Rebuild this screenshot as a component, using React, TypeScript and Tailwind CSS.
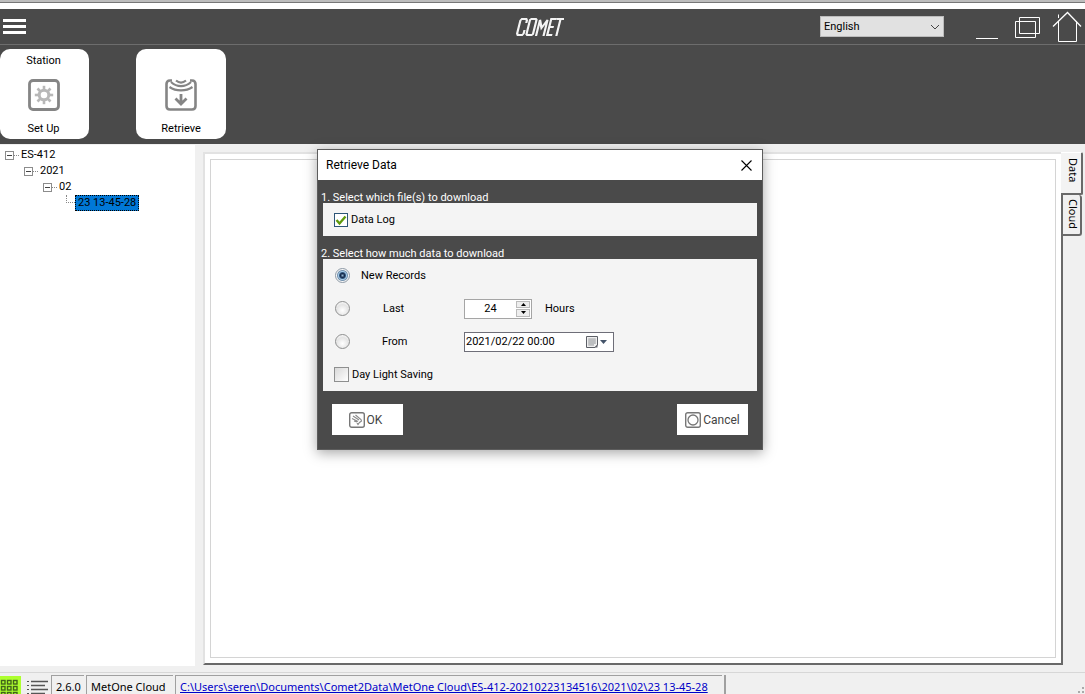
import React, { useState } from "react";

const dialogIcon = "h-4 w-4 shrink-0";

function GearIcon() {
  const teeth = [0, 45, 90, 135, 180, 225, 270, 315];
  return (
    <svg viewBox="0 0 32 32" className="h-8 w-8" fill="none" aria-hidden="true">
      <rect x="1.5" y="1.5" width="29" height="29" rx="3.5" stroke="#858585" strokeWidth="2.8" />
      <g stroke="#b8b8b8">
        <circle cx="16" cy="16" r="4.8" strokeWidth="3" />
        {teeth.map((a) => (
          <path key={a} d="M16 11V6.8" strokeWidth="2.6" transform={`rotate(${a} 16 16)`} />
        ))}
      </g>
    </svg>
  );
}

function RetrieveIcon() {
  return (
    <svg viewBox="0 0 32 32" className="h-8 w-8" fill="none" stroke="#858585" aria-hidden="true">
      <path d="M7 1.5H5C2.5 1.5 1.5 3 1.5 5V27C1.5 29.5 3 30.5 5 30.5H27C29.5 30.5 30.5 29 30.5 27V5C30.5 3 29.5 1.5 27 1.5H25" strokeWidth="2.6" />
      <path d="M4.500 8C11 12.500 21 12.500 27.500 8" strokeWidth="2.200" />
      <path d="M6 3C12 8.500 20 8.500 26 3" strokeWidth="2.200" />
      <path d="M11 1.500C14 4 18 4 21 1.500" strokeWidth="2.200" />
      <path d="M16 15V24.500M10.500 19.500L16 25L21.500 19.500" strokeWidth="2.800" />
    </svg>
  );
}

function Branch({ level, label }: { level: number; label: string }) {
  const indent = ["pl-[5px]", "pl-6", "pl-[43px]"][level];
  return (
    <div className={`flex h-4 items-center ${indent}`}>
      <button aria-label={`Collapse ${label}`} className="flex h-[9px] w-[9px] items-center justify-center border border-[#8c8c8c] bg-white">
        <span className="h-px w-[5px] bg-[#444]" />
      </button>
      <span className="w-[5px] border-t border-dotted border-[#888]" />
      <span className="pl-0.5">{label}</span>
    </div>
  );
}

function Logo() {
  return (
    <svg viewBox="0 0 50 20" className="h-5 w-[50px]" role="img" aria-label="COMET" fill="none" stroke="#f4f4f4" strokeWidth="2.2">
      <g transform="translate(5 1) skewX(-14)">
        <path d="M8.500 5V2.500L7.500 1H3L2 2.500V15.500L3 17H7.500L8.500 15.500V12" />
        <path d="M12.500 1H17L18 2V16L17 17H12.500L11.500 16V2Z" />
        <path d="M21.500 18V2L25 10L29 2V18" />
        <path d="M38 1H32.500V17H37.500M32.500 9H37" />
        <path d="M38 1H45.500M41.800 1V18" />
      </g>
    </svg>
  );
}

const radioClass =
  "m-0 h-[15px] w-[15px] appearance-none rounded-full border border-[#8e8f8f] bg-[radial-gradient(circle_at_50%_65%,#ffffff_0%,#e4e4e4_55%,#f4f4f4_75%)] checked:border-[#8d99a5] checked:bg-[radial-gradient(circle,#8fb4d0_0px,#15294a_2px,#34597f_3px,#a9cdea_4px,#7694b0_5px,#f8f8f8_6px)]";

export default function App() {
  const [mode, setMode] = useState("new");
  const [hours, setHours] = useState(24);
  const [log, setLog] = useState(true);
  return (
    <div className="relative flex h-screen flex-col overflow-hidden bg-[#f0f0f0] font-[Roboto,sans-serif] text-[11px] leading-4 text-black">
      <div className="flex h-[9px] shrink-0 flex-col bg-white">
        <div className="h-[3px] border-b border-[#777] bg-[#bdbdbd]" />
      </div>

      <header className="grid h-9 shrink-0 grid-cols-3 items-center border-b border-[#6d6d6d] bg-[#4a4a4a]">
        <button aria-label="Menu" className="ml-[3px] flex w-[23px] flex-col gap-[3px]">
          <span className="h-[3px] w-full bg-white" />
          <span className="h-[3px] w-full bg-white" />
          <span className="h-[3px] w-full bg-white" />
        </button>
        <div className="flex justify-center pr-1.5">
          <Logo />
        </div>
        <div className="flex items-center justify-end pr-[3px]">
          <div className="relative mr-8">
            <select aria-label="Language" className="h-[21px] w-[124px] appearance-none border border-[#bcbcbc] bg-[#e1e1e1] pl-[3px]">
              <option>English</option>
            </select>
            <svg viewBox="0 0 10 6" className="pointer-events-none absolute top-2 right-1 h-1.5 w-2.5" fill="none" stroke="#444" aria-hidden="true">
              <path d="M1 1L5 5L9 1" />
            </svg>
          </div>
          <div className="flex items-center gap-4">
            <button aria-label="Minimize" className="h-6 w-[22px] border-b border-white" />
            <button aria-label="Restore">
              <svg viewBox="0 0 26 22" className="h-[22px] w-[26px]" fill="none" stroke="#fff">
                <path d="M5.500 1.500H25.500V17.500H5.500ZM1.500 5.500H21.500V21.500H1.500Z" />
              </svg>
            </button>
            <button aria-label="Home" className="-ml-1">
              <svg viewBox="0 0 30 31" className="h-[31px] w-[30px]" fill="none" stroke="#fff">
                <path d="M1 15.500L15.500 1.500L29 15.500" strokeWidth="1.300" />
                <path d="M6.500 10V30.500H24.500V10M6.500 7V3.500" />
              </svg>
            </button>
          </div>
        </div>
      </header>

      <nav aria-label="Station actions" className="flex h-[99px] shrink-0 items-start gap-[47px] bg-[#4a4a4a] pt-1">
        <button className="flex h-[90px] w-[89px] flex-col items-center justify-between rounded-[10px] bg-white pt-1 pr-0.5 pb-0.5">
          <span>Station</span>
          <GearIcon />
          <span>Set Up</span>
        </button>
        <button className="flex h-[90px] w-[90px] flex-col items-center justify-between rounded-[10px] bg-white pt-1 pb-0.5">
          <span className="h-4" />
          <RetrieveIcon />
          <span>Retrieve</span>
        </button>
      </nav>

      <div className="flex min-h-0 flex-1">
        <aside className="mt-px mb-1.5 w-[195px] shrink-0 bg-white pt-0.5">
          <Branch level={0} label="ES-412" />
          <Branch level={1} label="2021" />
          <Branch level={2} label="02" />
          <div className="flex h-4 items-start pl-[66px]">
            <span className="h-2 w-[9px] border-b border-l border-dotted border-[#888]" />
            <button className="h-4 w-16 border border-dotted border-black bg-[#0078d7] px-0.5 text-left leading-[14px] whitespace-nowrap">23 13-45-28</button>
          </div>
        </aside>
        <main className="mt-2 mb-[7px] ml-2 flex min-w-0 flex-1">
          <section className="min-w-0 flex-1 border-2 border-t-[#e2e2e2] border-r-[#696969] border-b-[#696969] border-l-[#e2e2e2] bg-white p-[5px]">
            <div className="h-full border border-[#d4d4d4] bg-white" />
          </section>
          <div role="tablist" className="-ml-0.5 flex w-6 shrink-0 flex-col items-start font-['Noto_Sans',sans-serif]">
            <button role="tab" aria-selected="true" className="flex h-[43px] w-[22px] items-center justify-start rounded-r-[2px] border-t border-r-2 border-b-2 border-t-white border-r-[#696969] border-b-[#696969] bg-[#f3f3f3] pt-[5px] pl-1 [writing-mode:vertical-rl]">
              Data
            </button>
            <button role="tab" aria-selected="false" className="flex h-[41px] w-[21px] items-center justify-center rounded-r-[3px] border-2 border-t-0 border-[#696969] bg-[#f0f0f0] pl-0.5 [writing-mode:vertical-rl]">
              Cloud
            </button>
          </div>
        </main>
      </div>

      <footer className="flex h-[22px] shrink-0 items-start border-t border-[#d7d7d7] font-['Noto_Sans',sans-serif] text-[11px] leading-[14px] whitespace-nowrap">
        <button aria-label="Grid view" className="mt-[3px] h-[18px] w-[21px] overflow-hidden bg-[#adff2f]">
          <svg viewBox="0 0 21 20" className="h-5 w-[21px]" fill="none" stroke="#41641b" strokeWidth="1.400">
            {[1.5, 7.5, 13.5].map((x) => [4.5, 10.5, 16.5].map((y) => <rect key={`${x}-${y}`} x={x} y={y} width="3.5" height="3.5" />))}
          </svg>
        </button>
        <button aria-label="List view" className="mt-[3px] ml-[5px] h-[18px] w-[25px] overflow-hidden">
          <svg viewBox="0 0 25 20" className="h-5 w-[25px]" fill="none" stroke="#555">
            <path d="M5 5.500H22M5 9.500H19M5 13.500H22M5 17.500H19" strokeWidth="1.400" />
            <path d="M1 5.500H3M1 9.500H3M1 13.500H3M1 17.500H3" />
          </svg>
        </button>
        <span className="mt-0.5 h-[19px] w-[33px] border-t border-l border-[#a0a0a0] pt-1 pl-1">2.6.0</span>
        <span className="mt-0.5 ml-0.5 h-[19px] w-[87px] border-t border-l border-[#a0a0a0] pt-1 pl-1">MetOne Cloud</span>
        <span className="mt-0.5 ml-0.5 h-[19px] w-[547px] border-t border-l border-[#a0a0a0] pt-1 pl-1">
          <a href="#folder" className="text-[#0000c8] underline">C:\Users\seren\Documents\Comet2Data\MetOne Cloud\ES-412-20210223134516\2021\02\23 13-45-28</a>
        </span>
        <span className="mt-0.5 ml-0.5 h-[19px] border-l-2 border-[#a0a0a0]" />
        <svg viewBox="0 0 8 8" className="ml-auto h-2 w-2 self-end" fill="#aaa" aria-hidden="true">
          <path d="M5 1h2v2H5zM5 5h2v2H5zM1 5h2v2H1z" />
        </svg>
      </footer>

      <div role="dialog" aria-labelledby="dialog-title" className="absolute top-[149px] left-[317px] flex w-[446px] flex-col border border-[#5c5c5c] bg-[#4a4a4a] leading-[17px] shadow-[0_3px_12px_rgba(0,0,0,0.35)]">
        <div className="flex h-[30px] items-center justify-between bg-white pr-2.5 pl-2 text-xs">
          <h1 id="dialog-title">Retrieve Data</h1>
          <button aria-label="Close">
            <svg viewBox="0 0 11 11" className="h-[11px] w-[11px]" stroke="#000" strokeWidth="1.100">
              <path d="M0.500 0.500L10.500 10.500M10.500 0.500L0.500 10.500" />
            </svg>
          </button>
        </div>
        <div className="px-[5px]">
          <h2 className="-ml-0.5 flex h-[23px] items-end text-white">
            <span className="h-3.5">1. Select which file(s) to download</span>
          </h2>
          <div className="flex h-[33px] items-center bg-[#f4f4f4] pl-[11px]">
            <label className="flex items-center gap-[3px]">
              <span className="relative flex">
                <input type="checkbox" checked={log} onChange={() => setLog(!log)} className="h-3.5 w-3.5 appearance-none border border-[#2c5577] bg-white" />
                {log && (
                  <svg viewBox="0 0 14 14" className="pointer-events-none absolute inset-0 h-3.5 w-3.5" fill="none" stroke="#5f9a0c" strokeWidth="2.400" aria-hidden="true">
                    <path d="M2.500 7L5.500 10.500L11.500 3.500" />
                  </svg>
                )}
              </span>
              Data Log
            </label>
          </div>
          <h2 className="-ml-0.5 flex h-[23px] items-end text-white">
            <span className="h-3.5">2. Select how much data to download</span>
          </h2>
          <div className="h-[132px] bg-[#f4f4f4] pl-3">
            <div className="flex h-[33px] items-center">
              <input id="new" type="radio" name="range" checked={mode === "new"} onChange={() => setMode("new")} className={radioClass} />
              <label htmlFor="new" className="pl-[11px]">New Records</label>
            </div>
            <div className="flex h-[33px] items-center">
              <input id="last" type="radio" name="range" checked={mode === "last"} onChange={() => setMode("last")} className={radioClass} />
              <label htmlFor="last" className="w-[114px] pl-[33px]">Last</label>
              <div className="flex h-5 w-[68px] border border-[#a5a5a5] bg-white">
                <input aria-label="Hours" type="text" inputMode="numeric" value={hours} onChange={(e) => setHours(Number(e.target.value) || 0)} className="w-[51px] min-w-0 text-center outline-none" />
                <div className="flex w-[15px] flex-col gap-px py-px pr-px">
                  <button aria-label="Increase" onClick={() => setHours(hours + 1)} className="flex flex-1 items-center justify-center border border-[#bbb] bg-[#eee]">
                    <svg viewBox="0 0 5 3" className="h-[3px] w-[5px]"><path d="M0 3L2.500 0L5 3Z" /></svg>
                  </button>
                  <button aria-label="Decrease" onClick={() => setHours(Math.max(0, hours - 1))} className="flex flex-1 items-center justify-center border border-[#bbb] bg-[#eee]">
                    <svg viewBox="0 0 5 3" className="h-[3px] w-[5px]"><path d="M0 0L2.500 3L5 0Z" /></svg>
                  </button>
                </div>
              </div>
              <span className="pl-[13px]">Hours</span>
            </div>
            <div className="flex h-[33px] items-center">
              <input id="from" type="radio" name="range" checked={mode === "from"} onChange={() => setMode("from")} className={radioClass} />
              <label htmlFor="from" className="w-[114px] pl-8">From</label>
              <div className="flex h-5 w-[150px] items-center justify-between border border-[#6e6e78] bg-white pr-1.5">
                <input aria-label="Start date" type="text" defaultValue="2021/02/22 00:00" className="w-[110px] min-w-0 pl-px outline-none" />
                <button aria-label="Open calendar" className="flex items-center gap-0.5">
                  <svg viewBox="0 0 12 12" className="h-3 w-3" fill="none">
                    <path d="M0.500 0.500H11.500V9L9 11.500H0.500Z" fill="#eee" stroke="#5c5f66" />
                    <path d="M3 2.500V9.500M5 2.500V9.500M7 2.500V9.500M9 2.500V8M2.500 3H9.500M2.500 5H9.500M2.500 7H9.500M2.500 9H8" stroke="#8d9096" strokeWidth="0.600" />
                    <path d="M11.500 8.500V11.500H8.500Z" fill="#5c5f66" />
                  </svg>
                  <svg viewBox="0 0 7 4" className="h-1 w-[7px]"><path d="M0 0H7L3.500 4Z" fill="#44546a" /></svg>
                </button>
              </div>
            </div>
            <div className="flex h-[33px] items-center">
              <label className="-ml-px flex items-center gap-[3px]">
                <input type="checkbox" className="h-[15px] w-[15px] appearance-none border border-[#8e8f8f] bg-linear-to-br from-[#d9d9d9] to-white" />
                Day Light Saving
              </label>
            </div>
          </div>
        </div>
        <div className="flex justify-between pt-[13px] pr-3.5 pb-3.5 pl-3.5 text-xs text-[#444]">
          <button className="flex h-[31px] w-[71px] items-center justify-center gap-0.5 bg-white pr-1">
            <svg viewBox="0 0 16 16" className={dialogIcon} fill="none" stroke="#777">
              <rect x="0.700" y="0.700" width="14.600" height="14.600" rx="2" strokeWidth="1.400" />
              <path d="M4 4L10 8M6.500 3L12 7.500L12.500 9L10.500 10.500L9 12.500L8 11M3 6.500L9 9.500M5 9L8 10" stroke="#8a8a8a" strokeWidth="1.100" />
            </svg>
            OK
          </button>
          <button className="flex h-[31px] w-[71px] items-center justify-center gap-0.5 bg-white">
            <svg viewBox="0 0 16 16" className={dialogIcon} fill="none" stroke="#777">
              <rect x="0.700" y="0.700" width="14.600" height="14.600" rx="2" strokeWidth="1.400" />
              <circle cx="8" cy="8" r="5" strokeWidth="1.300" />
            </svg>
            Cancel
          </button>
        </div>
      </div>
    </div>
  );
}
